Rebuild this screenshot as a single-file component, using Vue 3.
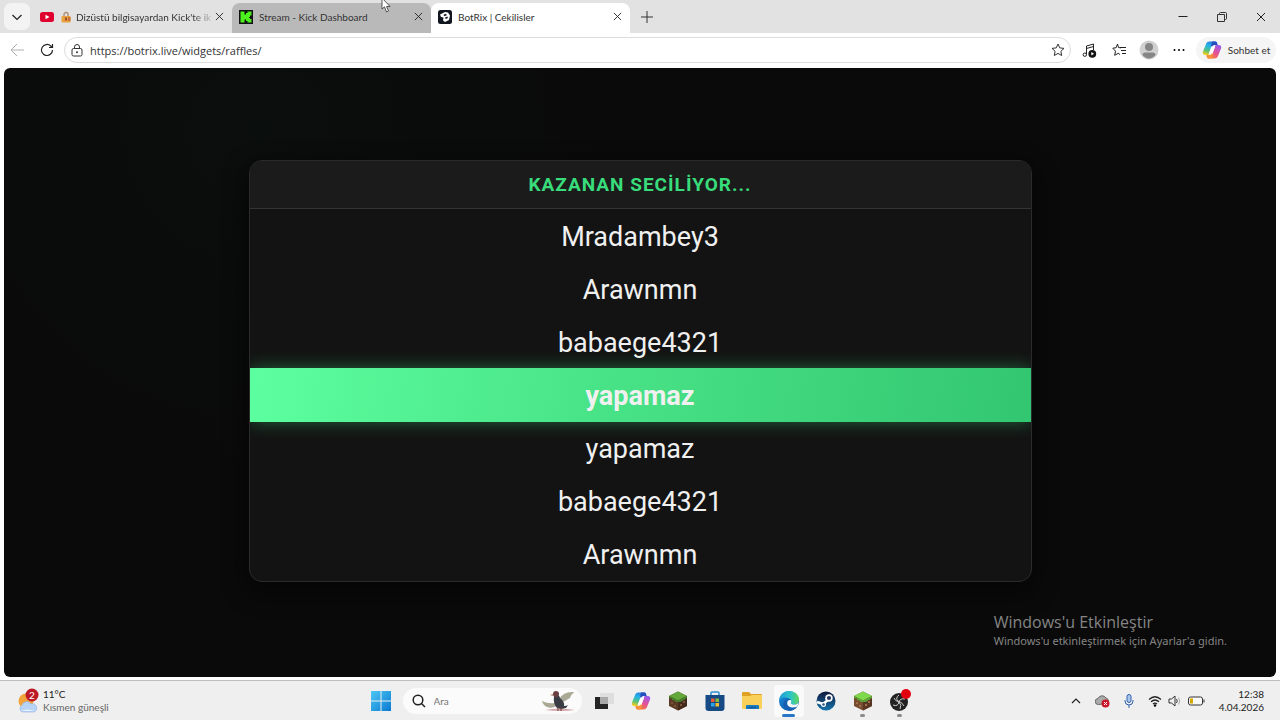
<template>
  <div class="desktop">
    <!-- Shared shapes -->
    <svg class="shapes" aria-hidden="true">
      <defs>
        <linearGradient id="cp-a" x1="0.6" y1="0" x2="0.3" y2="1">
          <stop offset="0" stop-color="#2b7de0" />
          <stop offset="0.35" stop-color="#25b3e8" />
          <stop offset="0.7" stop-color="#55c27a" />
          <stop offset="1" stop-color="#f5cf1e" />
        </linearGradient>
        <linearGradient id="cp-b" x1="0.7" y1="0" x2="0.3" y2="1">
          <stop offset="0" stop-color="#9a5cf0" />
          <stop offset="0.5" stop-color="#e2509a" />
          <stop offset="1" stop-color="#fb7a3c" />
        </linearGradient>
        <linearGradient id="win" x1="0" y1="0" x2="1" y2="1">
          <stop offset="0" stop-color="#4cc8f5" />
          <stop offset="1" stop-color="#0a78d0" />
        </linearGradient>
        <linearGradient id="edge-a" x1="0" y1="0" x2="1" y2="0">
          <stop offset="0" stop-color="#1d9ddb" />
          <stop offset="0.6" stop-color="#2fc6c4" />
          <stop offset="1" stop-color="#62d957" />
        </linearGradient>
        <linearGradient id="edge-b" x1="0" y1="0" x2="1" y2="1">
          <stop offset="0" stop-color="#1b8fdc" />
          <stop offset="1" stop-color="#0c4da0" />
        </linearGradient>
        <linearGradient id="steam" x1="0" y1="0" x2="0" y2="1">
          <stop offset="0" stop-color="#10173a" />
          <stop offset="1" stop-color="#1574ad" />
        </linearGradient>
      </defs>
      <symbol id="copilot" viewBox="0 0 20 20">
        <path d="M14.200 1.500H7.500C5.500 1.500 4.500 2.500 3.800 4.500L1 11.500c-.8 2.300.3 3.500 2.300 3.500h3.200l3-9c.6-1.600 1.400-2 2.500-2h3z" fill="url(#cp-a)" />
        <path d="M5.800 18.500h6.700c2 0 3-1 3.700-3L19 8.500c.8-2.300-.3-3.500-2.300-3.500h-3.200l-3 9c-.6 1.600-1.400 2-2.500 2H4.500z" fill="url(#cp-b)" />
        <path d="M10 1.500h3c1.500 0 2 .8 2.300 2L15.700 5H13c-1.600 0-2.300.6-2.800 2L9 6z" fill="#2350bd" />
        <path d="M10 18.500H7c-1.500 0-2-.8-2.300-2L4.300 15H7c1.600 0 2.300-.6 2.800-2L11 14z" fill="#f7923a" />
        <path d="M9.800 6.500h3.400l-2.900 7H6.800z" fill="#fff" />
      </symbol>
      <symbol id="close" viewBox="0 0 10 10">
        <path d="M1 1l8 8M9 1L1 9" fill="none" stroke="#222" stroke-width="1" />
      </symbol>
      <symbol id="block" viewBox="0 0 20 20">
        <path d="M10 0.500L19 5v10l-9 4.500L1 15V5z" fill="#5b3b26" />
        <path d="M10 9.500L19 5v10l-9 4.500z" fill="#432a1b" />
        <path d="M10 0.500L19 5l-9 4.500L1 5z" fill="#62a83a" />
        <path d="M1 5l9 4.500L19 5v2l-2 1v1l-2 0v1l-3 1-2 0-2 0-2-1.500-2-.5V7.500L1 7z" fill="#477f2a" />
        <path d="M3 11h2v2H3zM6 14h2v2H6zM12 13h2v2h-2zM15 10h2v2h-2z" fill="#7b5537" />
      </symbol>
    </svg>

    <!-- Tab strip -->
    <header class="tabs">
      <button class="tab-menu" aria-label="Sekme menüsü">
        <svg width="12" height="12" viewBox="0 0 12 12"><path d="M1.500 4L6 8.500 10.500 4" fill="none" stroke="#222" stroke-width="1.200" /></svg>
      </button>
      <div v-for="t in tabs" :key="t.id" class="tab" :class="t.id">
        <svg v-if="t.id === 'youtube'" class="favicon" viewBox="0 0 14 14">
          <rect y="2" width="14" height="10" rx="2.500" fill="#e0002f" />
          <path d="M5.500 4.700v4.600L9.500 7z" fill="#fff" />
        </svg>
        <svg v-else-if="t.id === 'kick'" class="favicon" viewBox="0 0 14 14">
          <rect width="14" height="14" fill="#111" />
          <path d="M1.500 1.500h4v3h1.500V3h1.500V1.500h4v4H11V7H10v1h1v1h1.500v3.500h-4V11H7V9.500H5.500v3h-4z" fill="#4bf01d" />
        </svg>
        <svg v-else class="favicon" viewBox="0 0 14 14">
          <rect width="14" height="14" rx="2.500" fill="#11151f" />
          <path d="M2 4.500L7 2l3 .5 2 3-1 4.500-4 2-2-1.500.5-3L3 7z" fill="#fff" />
          <path d="M5.500 4.700l2.500-1 .8 1.500-2.500 1.100zM7 7.500L9.300 6.500l.7 1.600-2.300 1z" fill="#11151f" />
        </svg>
        <svg v-if="t.id === 'youtube'" class="lock" viewBox="0 0 10 12">
          <path d="M3 6V3.500a2 2 0 0 1 4 0V6" fill="none" stroke="#a98a72" stroke-width="1.300" />
          <rect x="0.500" y="5" width="9" height="6.500" rx="1" fill="#e8a13d" />
          <path d="M4 6.500h2v3H4z" fill="#9c4c2c" />
          <path d="M7 6h2.500v4H7z" fill="#c86f3a" />
        </svg>
        <a href="#" class="tab-title">{{ t.title }}</a>
        <button class="tab-close" aria-label="Kapat"><svg width="9" height="9"><use href="#close" /></svg></button>
      </div>
      <button class="new-tab" aria-label="Yeni sekme">
        <svg width="12" height="12" viewBox="0 0 12 12"><path d="M6 0v12M0 6h12" stroke="#333" stroke-width="1" /></svg>
      </button>
      <div class="window-buttons">
        <button aria-label="Simge durumuna küçült"><svg width="10" height="10" viewBox="0 0 10 10"><path d="M0.500 4.500h9" stroke="#222" /></svg></button>
        <button aria-label="Önceki boyut">
          <svg width="10" height="10" viewBox="0 0 10 10"><path d="M0.500 2.500h7v7h-7zM2.500 2V1.500a1 1 0 0 1 1-1h5a1 1 0 0 1 1 1v5a1 1 0 0 1-1 1H8" fill="none" stroke="#333" /></svg>
        </button>
        <button aria-label="Pencereyi kapat"><svg width="10" height="10"><use href="#close" /></svg></button>
      </div>
    </header>

    <!-- Address row -->
    <nav class="toolbar">
      <button class="tool" aria-label="Geri">
        <svg width="14" height="14" viewBox="0 0 14 14"><path d="M14 7H1M7 1L1 7l6 6" fill="none" stroke="#b0b0b0" /></svg>
      </button>
      <button class="tool" aria-label="Yenile">
        <svg width="14" height="14" viewBox="0 0 14 14"><path d="M12.500 7a5.500 5.500 0 1 1-1.700-4L12.500 4.500M12.500 1v3.500H9" fill="none" stroke="#222" stroke-width="1.200" /></svg>
      </button>
      <label class="address">
        <svg width="12" height="13" viewBox="0 0 12 13">
          <rect x="1" y="4.500" width="10" height="7.500" rx="1.500" fill="none" stroke="#333" />
          <path d="M3.500 4.500V3a2.500 2.500 0 0 1 5 0v1.500" fill="none" stroke="#333" />
          <circle cx="6" cy="8.200" r="1" fill="#333" />
        </svg>
        <input v-model="url" type="text" aria-label="Adres" />
        <svg width="14" height="14" viewBox="0 0 14 14"><path d="M7 1l1.800 3.900 4.200.5-3.100 2.900.8 4.200L7 10.400l-3.700 2.100.8-4.200L1 5.400l4.200-.5z" fill="none" stroke="#333" stroke-linejoin="round" /></svg>
      </label>
      <button class="tool" aria-label="Müzik">
        <svg width="15" height="15" viewBox="0 0 15 15">
          <path d="M4.500 11.500V3l7-2v6M4.500 5.500l7-2" fill="none" stroke="#222" />
          <circle cx="2.800" cy="11.700" r="1.700" fill="none" stroke="#222" />
          <circle cx="10.300" cy="10.800" r="3.900" fill="#111" />
          <path d="M9.300 9v3.600l2.800-1.800z" fill="#fff" />
        </svg>
      </button>
      <button class="tool" aria-label="Sık kullanılanlar">
        <svg width="15" height="14" viewBox="0 0 15 14"><path d="M9 4.900L6.500 4.500 5.500 1 4.200 4.700.8 5.200l2.700 2.900-.8 4.200 3.500-2L8 11.500M8 4.500h6M9 7.500h5M10 10.500h4" fill="none" stroke="#222" stroke-linejoin="round" /></svg>
      </button>
      <button class="tool" aria-label="Profil">
        <svg width="20" height="20" viewBox="0 0 20 20">
          <circle cx="10" cy="10" r="9.500" fill="#d0d0d0" />
          <circle cx="10" cy="7" r="4" fill="#858585" />
          <path d="M3.500 15a3 2.500 0 0 1 3-2.500h7a3 2.500 0 0 1 3 2.500c-3.500 4.500-9.500 4.500-13 0z" fill="#858585" />
        </svg>
      </button>
      <button class="tool" aria-label="Diğer">
        <svg width="12" height="4" viewBox="0 0 12 4"><circle cx="1.500" cy="2" r="1" /><circle cx="6" cy="2" r="1" /><circle cx="10.500" cy="2" r="1" /></svg>
      </button>
      <button class="chat"><svg width="20" height="20"><use href="#copilot" /></svg>Sohbet et</button>
    </nav>

    <!-- Raffle widget -->
    <main class="page">
      <section class="raffle">
        <h1>KAZANAN SECİLİYOR...</h1>
        <ul>
          <li v-for="(name, i) in names" :key="i" :class="{ winner: i === selected }">{{ name }}</li>
        </ul>
      </section>
      <div class="activate">
        <p class="big">Windows'u Etkinleştir</p>
        <p>Windows'u etkinleştirmek için Ayarlar'a gidin.</p>
      </div>
    </main>

    <!-- Taskbar -->
    <footer class="taskbar">
      <button class="weather">
        <svg width="24" height="28" viewBox="0 0 24 28">
          <circle cx="9" cy="14" r="7.500" fill="#f2a33a" />
          <path d="M5 25a4 4 0 0 1 0-7 5 5 0 0 1 9-1 4 4 0 0 1 3 8z" fill="#b9d3f5" stroke="#8eb1e3" stroke-width=".6" />
          <path d="M4 24q6-3 14 0z" fill="#e8f2ff" />
          <circle cx="15" cy="8" r="6.500" fill="#bd1826" />
          <text x="15" y="12" text-anchor="middle" font-size="10" fill="#fff">2</text>
        </svg>
        <span><b>11°C</b><small>Kısmen güneşli</small></span>
      </button>

      <div class="apps">
        <button class="app" aria-label="Başlat">
          <svg width="20" height="20" viewBox="0 0 20 20"><path d="M0 0h9.500v9.500H0zM10.500 0H20v9.500h-9.500zM0 10.500h9.500V20H0zM10.500 10.500H20V20h-9.500z" fill="url(#win)" /></svg>
        </button>
        <label class="search">
          <svg width="14" height="14" viewBox="0 0 14 14"><circle cx="6" cy="6" r="4.800" fill="none" stroke="#222" stroke-width="1.500" /><path d="M9.500 9.500L13 13" stroke="#222" stroke-width="1.500" /></svg>
          <input type="text" placeholder="Ara" />
          <svg width="36" height="22" viewBox="0 0 36 22">
            <path d="M14 13Q7 14 1 11q1 4 5 6 5 2 9-1zM18 9Q23 1 33 2q-1 2-3 3 1 1-1 2 1 1-2 2-3 3-8 3z" fill="#aaa995" />
            <path d="M4 20q15-3 30 0-14 2-30 0z" fill="#d4a6aa" />
            <path d="M13 6q5-3 6 2 5 4 4 8 3 0 4-1l-2 3-5 1-4-1q-4-4-3-12z" fill="#3b3d45" />
            <circle cx="15" cy="4" r="3" fill="#6c4043" />
            <path d="M12 4l-3 1 3 1z" fill="#b38872" />
            <path d="M17 17v4M20 17v4" stroke="#6a3c3c" />
          </svg>
        </label>
        <button class="app" aria-label="Görev görünümü">
          <svg width="20" height="20" viewBox="0 0 20 20"><path d="M1 6h13v12H1z" fill="#252525" /><path d="M6 2h14v11H6z" fill="#dedede" /><path d="M6 6h8v7H6z" fill="#a9a9a9" /></svg>
        </button>
        <button class="app" aria-label="Copilot"><svg width="20" height="20"><use href="#copilot" /></svg></button>
        <button class="app" aria-label="Minecraft"><svg width="20" height="20"><use href="#block" /></svg></button>
        <button class="app" aria-label="Microsoft Store">
          <svg width="20" height="20" viewBox="0 0 20 20">
            <path d="M6 5V2q0-1 1-1h6q1 0 1 1v3" fill="none" stroke="#2d8fd0" stroke-width="1.500" />
            <path d="M0.500 4h19v13q0 3-3 3h-13q-3 0-3-3z" fill="#164a85" />
            <path d="M6 7.500h3.500V11H6z" fill="#ee5a35" /><path d="M10.500 7.500H14V11h-3.500z" fill="#84bd3a" />
            <path d="M6 12h3.500v3.500H6z" fill="#2ca5e8" /><path d="M10.500 12H14v3.500h-3.500z" fill="#f8bd2c" />
          </svg>
        </button>
        <button class="app" aria-label="Dosya Gezgini">
          <svg width="20" height="20" viewBox="0 0 20 20">
            <path d="M0 2q0-1 1-1h6l2 2h10q1 0 1 1v5H0z" fill="#dea123" />
            <path d="M0 5h8l2-1h10v13q0 1-1 1H1q-1 0-1-1z" fill="#f9d15a" />
            <path d="M4 18v-3q0-1 1-1h11q1 0 1 1v3z" fill="#1978bd" /><path d="M7 16h7v1H7z" fill="#0c5590" />
          </svg>
        </button>
        <button class="app active" aria-label="Edge">
          <svg width="20" height="20" viewBox="0 0 20 20">
            <circle cx="10" cy="10" r="10" fill="url(#edge-b)" />
            <path d="M0 9.500C1 3.500 5 0 10 0c6 0 10 4 10 8.500 0 3-2 5-5 5-2 0-3.500-.6-3.200-1.500.8-1.200.8-2 .2-3C10 6 3 5 0 9.500z" fill="url(#edge-a)" />
            <path d="M12 9c-3-1.500-5 .7-4.500 3.500.7 4 5.500 5.500 10.500 3.300-2 2.500-4 3.700-6 4C5 19 3.500 14 5 11c1.500-3 5-4 7-2z" fill="#175fb0" />
            <path d="M11.800 12c-.5 1.300 5 2.800 7.700-.3-.2 1.600-.8 3-1.500 4.100-4 1.700-9.500.8-9.800-3.300C8 9.500 10.500 8.500 12 9.300c.5.800.5 1.500-.2 2.700z" fill="#f4f9fc" />
          </svg>
        </button>
        <button class="app" aria-label="Steam">
          <svg width="20" height="20" viewBox="0 0 20 20">
            <circle cx="10" cy="10" r="9.500" fill="url(#steam)" />
            <path d="M1 11l6 2 5-4-2-2" fill="none" stroke="#fff" stroke-width="2.500" />
            <circle cx="13" cy="7" r="3.700" fill="#fff" /><circle cx="13" cy="7" r="2.100" fill="#26345d" />
            <circle cx="7.500" cy="13.500" r="2.500" fill="#fff" /><circle cx="7.500" cy="13.500" r="1.300" fill="#2e5685" />
          </svg>
        </button>
        <button class="app running" aria-label="Minecraft Launcher"><svg class="bright" width="20" height="20"><use href="#block" /></svg></button>
        <button class="app running" aria-label="OBS">
          <svg width="24" height="24" viewBox="0 0 24 24">
            <circle cx="11" cy="13" r="9" fill="#222" />
            <path d="M11 6q-4 3-1 6 4 1 6 5M5 16q5 2 6-3 1-4 6-3M12 20q2-4-1-7-4-1-5-4" fill="none" stroke="#ccc" stroke-width="1" />
            <circle cx="18" cy="5" r="5" fill="#e3000f" />
          </svg>
        </button>
      </div>

      <div class="tray">
        <button class="arrow" aria-label="Gizli simgeler"><svg width="10" height="6" viewBox="0 0 10 6"><path d="M1 5l4-4 4 4" fill="none" stroke="#222" stroke-width="1.200" /></svg></button>
        <svg width="15" height="14" viewBox="0 0 15 14">
          <path d="M3.500 10.500a3 3 0 0 1-.5-6 4.500 4.500 0 0 1 8-.5 3 3 0 0 1 1 5.500z" fill="#aaa" stroke="#666" />
          <circle cx="10.500" cy="9.500" r="4" fill="#c9182b" /><path d="M9 8l3 3M12 8l-3 3" stroke="#fff" />
        </svg>
        <svg width="10" height="14" viewBox="0 0 10 14"><rect x="3" y="0.500" width="4" height="8" rx="2" fill="#aac6ed" stroke="#2f61ae" /><path d="M1 6v1a4 4 0 0 0 8 0V6M5 11v3" fill="none" stroke="#2f61ae" /></svg>
        <button class="status" aria-label="Hızlı ayarlar">
          <svg width="14" height="12" viewBox="0 0 14 12"><path d="M1 4.500q6-5.500 12 0M3 6.800q4-3.600 8 0M5 9q2-1.800 4 0" fill="none" stroke="#222" stroke-width="1.200" /><circle cx="7" cy="10.500" r="1.200" /></svg>
          <svg width="14" height="12" viewBox="0 0 14 12"><path d="M1 4h2.500L7 1v10L3.500 8H1z" fill="none" stroke="#333" /><path d="M8.500 4q1.500 2 0 4" fill="none" stroke="#333" /><path d="M10.500 2.500q2.500 3.500 0 7" fill="none" stroke="#aaa" /></svg>
          <svg width="17" height="10" viewBox="0 0 17 10"><rect x="0.500" y="1" width="14" height="8" rx="2" fill="#f8f8f8" stroke="#333" /><path d="M2 2.500h3v5H2z" fill="#d7a900" /><path d="M16 3.500v3" stroke="#333" /></svg>
        </button>
        <time><span>12:38</span><span>4.04.2026</span></time>
      </div>
    </footer>

    <svg class="cursor" width="10" height="14" viewBox="0 0 10 14"><path d="M1 -2v11l2.500-2.200L5.500 12l2-1-2-4.500H9z" fill="#fff" stroke="#333" stroke-width=".8" /></svg>
  </div>
</template>

<script setup>
import { ref } from "vue"

const tabs = [
  { id: "youtube", title: "Dizüstü bilgisayardan Kick'te ik" },
  { id: "kick", title: "Stream - Kick Dashboard" },
  { id: "botrix", title: "BotRix | Cekilisler" },
]

const url = ref("https://botrix.live/widgets/raffles/")

const names = ["Mradambey3", "Arawnmn", "babaege4321", "yapamaz", "yapamaz", "babaege4321", "Arawnmn"]
const selected = 3
</script>

<style>
body { margin: 0; }
</style>

<style scoped>
.desktop {
  position: relative;
  display: flex;
  flex-direction: column;
  min-height: 100vh;
  overflow: hidden;
  background: #fff;
  color: #333;
  font-family: Lato, "Noto Sans", sans-serif;
  font-size: 10px;
}
.desktop * { box-sizing: border-box; }
.shapes { position: absolute; width: 0; height: 0; }
svg { flex: none; display: block; }
button {
  display: flex;
  align-items: center;
  justify-content: center;
  padding: 0;
  border: none;
  background: none;
  color: inherit;
  font: inherit;
}
input {
  flex: 1;
  min-width: 0;
  padding: 0;
  border: none;
  outline: none;
  background: none;
  color: inherit;
  font: inherit;
}

/* Tabs */
.tabs { display: flex; height: 33px; padding: 3px 0 0 4px; background: #e2e2e2; }
.tab-menu { width: 26px; height: 27px; margin-right: 3px; border-radius: 7px; background: #f3f3f3; }
.tab {
  display: flex;
  align-items: center;
  width: 199px;
  padding: 0 8px 3px 7px;
  border-radius: 8px 8px 0 0;
}
.tab.kick { background: #b9b9b9; }
.tab.botrix { background: #fff; }
.favicon { width: 14px; height: 14px; margin-right: 6px; }
.lock { width: 10px; height: 12px; margin: 0 5px 0 1px; }
.tab-title {
  flex: 1;
  color: #333;
  text-decoration: none;
  white-space: nowrap;
}
.youtube .tab-title { mask-image: linear-gradient(90deg, #000 86%, rgba(0, 0, 0, 0.2)); }
.tab-close { width: 9px; height: 14px; margin-left: 4px; }
.new-tab { width: 34px; height: 27px; }
.window-buttons { display: flex; margin-left: auto; }
.window-buttons button { width: 39px; height: 27px; }

/* Toolbar */
.toolbar { display: flex; align-items: center; height: 34px; padding: 0 4px 0 2px; }
.tool { width: 30px; height: 26px; }
.address {
  display: flex;
  flex: 1;
  align-items: center;
  gap: 7px;
  height: 26px;
  margin: 0 3px 0 2px;
  padding: 0 5px 0 6px;
  border: 1px solid #dcdcdc;
  border-radius: 13px;
  font-family: "Open Sans", sans-serif;
  font-size: 11px;
}
.chat { gap: 6px; width: 80px; height: 26px; margin-left: 2px; border-radius: 13px; background: #f5f5f5; }

/* Page */
.page {
  position: relative;
  display: flex;
  flex: 1;
  align-items: center;
  justify-content: center;
  margin: 1px 4px 3px;
  padding-bottom: 3px;
  border-radius: 6px;
  background: radial-gradient(circle at 20% 10%, #0a0e0c, #0a0a0a 30%);
}
.raffle {
  display: flex;
  flex-direction: column;
  width: 90%;
  max-width: 783px;
  min-height: 422px;
  overflow: hidden;
  border: 1px solid #2b2b2b;
  border-radius: 13px;
  background: #131313;
  box-shadow: 0 8px 24px #050505;
  font-family: Roboto, sans-serif;
  text-align: center;
}
.raffle h1 {
  margin: 0;
  border-bottom: 1px solid #343434;
  background: #1b1b1b;
  color: #39dc7b;
  font-size: 19px;
  font-weight: 700;
  line-height: 47px;
  letter-spacing: 1px;
}
.raffle ul {
  display: grid;
  flex: 1;
  grid-auto-rows: 1fr;
  margin: 0;
  padding: 0;
  list-style: none;
}
.raffle li {
  display: flex;
  align-items: center;
  justify-content: center;
  padding-top: 2px;
  color: #f0f0f0;
  font-size: 27px;
  line-height: 50px;
}
.raffle .winner {
  background: linear-gradient(100deg, #5cff9f, #49e387 45%, #32c671);
  box-shadow: 0 0 18px rgba(60, 220, 125, 0.4);
  font-weight: 700;
}
.activate {
  position: absolute;
  right: 49px;
  bottom: 28px;
  color: #858585;
  font-family: "Noto Sans", sans-serif;
  font-size: 11px;
  line-height: 16px;
}
.activate p { margin: 0; }
.activate .big { font-family: "Open Sans", sans-serif; font-size: 16px; line-height: 22px; }

/* Taskbar */
.taskbar {
  display: grid;
  grid-template-columns: 1fr auto 1fr;
  align-items: center;
  height: 40px;
  border-top: 1px solid #bdbdbd;
  background: #efefef;
}
.weather { gap: 2px; justify-self: start; padding-left: 17px; text-align: left; line-height: 13px; }
.weather b, .weather small { display: block; color: #222; font-size: 10px; font-weight: 400; }
.weather small { color: #666; }
.apps { display: flex; align-items: center; gap: 7px; }
.app { position: relative; width: 30px; height: 32px; border-radius: 4px; }
.app.active { background: #fafafa; }
.app.active::after, .app.running::after {
  content: "";
  position: absolute;
  bottom: 0;
  width: 5px;
  height: 3px;
  border-radius: 2px;
  background: #8b8b8b;
}
.app.active::after { width: 13px; background: #2877c7; }
.bright { filter: brightness(1.3); }
.search {
  display: flex;
  align-items: center;
  gap: 8px;
  width: 179px;
  height: 26px;
  padding: 0 5px 0 9px;
  border-radius: 13px;
  background: #fbfbfb;
}
.tray { display: flex; align-items: center; justify-self: end; gap: 14px; padding-right: 16px; }
.status { gap: 6px; }
time { display: flex; flex-direction: column; color: #222; line-height: 13px; text-align: right; }

.cursor { position: absolute; top: 0; left: 381px; }
</style>
